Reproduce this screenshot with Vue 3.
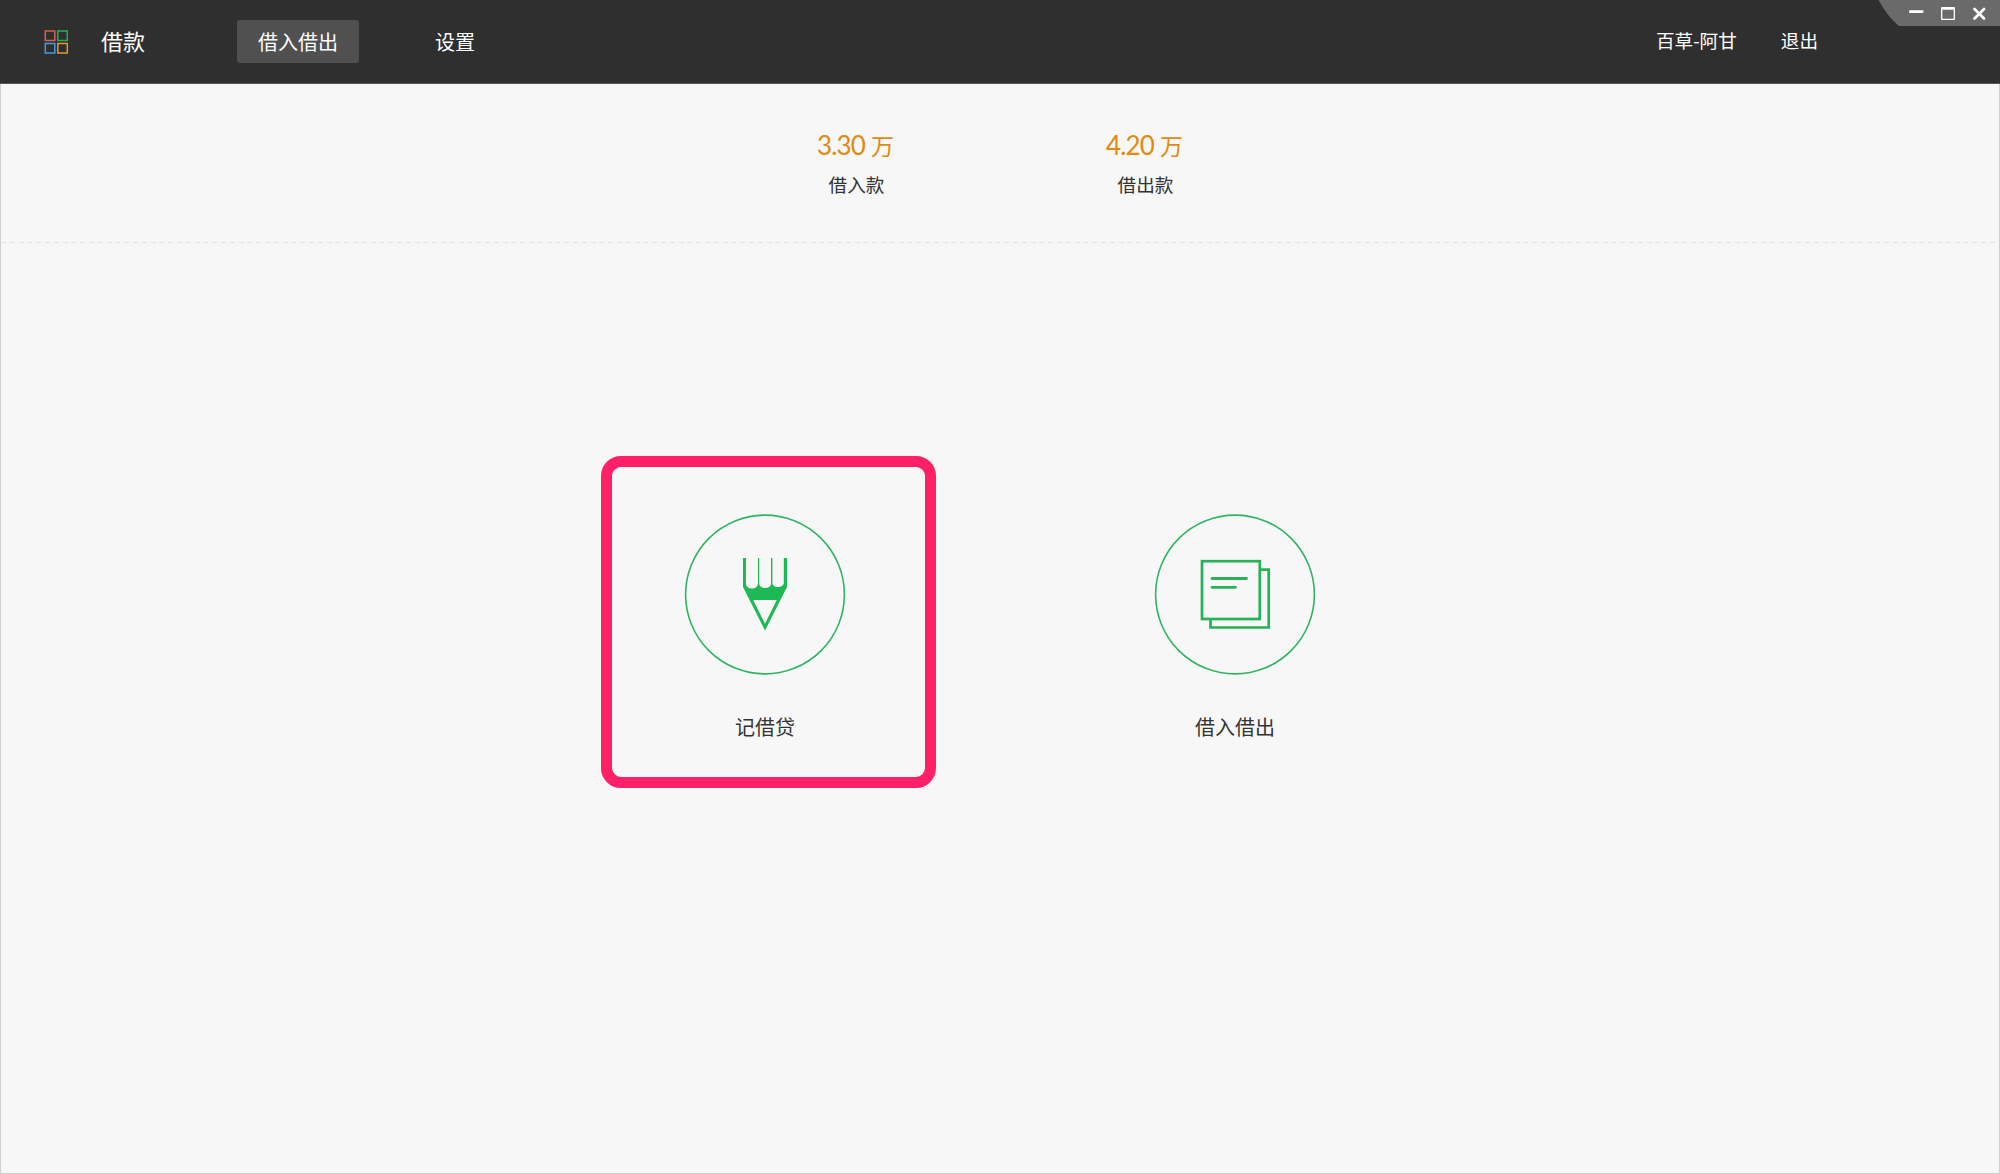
<script setup>
const totals = [
  { amount: '3.30', label: '借入款' },
  { amount: '4.20', label: '借出款' },
]
</script>

<template>
  <div class="app">
    <header class="bar">
      <svg class="logo" width="24" height="24" viewBox="0 0 24 24" fill="none" stroke-width="1.5">
        <rect x="1.3" y="1" width="9.5" height="9.5" stroke="#d8614f" />
        <rect x="13.8" y="1" width="9.5" height="9.5" stroke="#27ae55" />
        <rect x="1.3" y="13.5" width="9.5" height="9.5" stroke="#469ae6" />
        <rect x="13.8" y="13.5" width="9.5" height="9.5" stroke="#e29a2a" />
      </svg>
      <h1 class="title">借款</h1>
      <nav class="nav">
        <a class="tab active">借入借出</a>
        <a class="tab">设置</a>
      </nav>
      <div class="user">
        <span>百草-阿甘</span>
        <a>退出</a>
      </div>
      <svg class="window-controls" width="122" height="26" viewBox="0 0 122 26">
        <path d="M0.5 0H122V26H21Q9 16 0.5 0Z" fill="#6a6a6a" />
        <rect x="31" y="10.2" width="14.5" height="2.7" rx="1" fill="#fff" />
        <path d="M64 7H76Q77 7 77 8V19Q77 20 76 20H64Q63 20 63 19V8Q63 7 64 7ZM64.3 9.7V18.8H75.7V9.7Z" fill="#fff" fill-rule="evenodd" />
        <path d="M96.5 9L106 18.5M106 9L96.5 18.5" stroke="#fff" stroke-width="2.7" stroke-linecap="round" />
      </svg>
    </header>

    <div class="body">
      <section class="summary">
        <div v-for="t in totals" :key="t.label" class="total">
          <div class="amount"><span class="number">{{ t.amount }}</span><span class="unit">万</span></div>
          <div class="label">{{ t.label }}</div>
        </div>
      </section>
      <div class="divider"></div>
      <main class="actions">
        <div class="action">
          <svg class="icon" width="162" height="162" viewBox="0 0 162 162">
            <circle cx="81" cy="81.5" r="79.4" fill="none" stroke="#2fb562" stroke-width="1.6" />
            <path d="M59 45H62V70.5A6 4.8 0 0 0 74 71V45H75.2V71A6 4.8 0 0 0 87 71V45H88.4V71A6 4.8 0 0 0 99.8 70.5V45H103V74L81 117.5L59 74ZM69.2 87L81 110.8L92.8 87Z" fill="#1db954" fill-rule="evenodd" />
          </svg>
          <span>记借贷</span>
          <div class="highlight"></div>
        </div>
        <div class="action">
          <svg class="icon" width="162" height="162" viewBox="0 0 162 162" fill="none" stroke="#27b257">
            <circle cx="81" cy="81.5" r="79.4" stroke="#2fb562" stroke-width="1.6" />
            <rect x="48" y="48.2" width="57.8" height="57.8" stroke-width="2.7" />
            <path d="M106 56.7H114.7V114.5H56.5V106" stroke-width="2.7" />
            <path d="M58 65.5H92.5M58 74.3H81.5" stroke-width="2.8" stroke-linecap="round" />
          </svg>
          <span>借入借出</span>
        </div>
      </main>
    </div>
  </div>
</template>

<style>
body {
  background: #f7f7f7;
}
</style>

<style scoped>
.app {
  display: flex;
  flex-direction: column;
  height: 1174px;
  font-family: "Noto Sans CJK SC", sans-serif;
  color: #333;
}
.bar {
  position: relative;
  box-sizing: border-box;
  display: flex;
  align-items: center;
  height: 84px;
  padding: 0 182px 0 44px;
  background: #2f2f2f;
  border-bottom: 1px solid #555;
  color: #fff;
}
.title {
  margin: 0 0 3px 33px;
  font-size: 22px;
  line-height: 32px;
  font-weight: 400;
}
.nav {
  display: flex;
  gap: 55px;
  margin-left: 92px;
}
.tab {
  padding: 0 21px;
  font-size: 20px;
  line-height: 43px;
  border-radius: 3px;
}
.active {
  background: #505050;
}
.user {
  display: flex;
  gap: 44px;
  margin: 0 0 3px auto;
  font-size: 18.6px;
  line-height: 28px;
}
.window-controls {
  position: absolute;
  top: 0;
  right: 0;
}
.body {
  box-sizing: border-box;
  flex: 1;
  display: flex;
  flex-direction: column;
  border: 1px solid #d0d0d0;
  border-top: 0;
  background: #f7f7f7;
}
.summary {
  display: flex;
  justify-content: center;
  gap: 209px;
  height: 158px;
  box-sizing: border-box;
  padding-top: 43px;
}
.total {
  width: 80px;
  text-align: center;
}
.amount {
  display: flex;
  align-items: baseline;
  justify-content: center;
  gap: 6px;
  line-height: 36px;
  color: #e08a10;
}
.number {
  font-family: Lato, sans-serif;
  font-size: 26px;
  letter-spacing: -0.8px;
}
.unit {
  font-size: 23px;
}
.label {
  margin-top: 7px;
  padding-left: 2px;
  font-size: 18.6px;
  line-height: 28px;
}
.divider {
  height: 1px;
  background: repeating-linear-gradient(90deg, #e3e3e3 0 5px, transparent 5px 8.8px);
}
.actions {
  display: flex;
  justify-content: center;
  gap: 308px;
  padding-top: 270px;
}
.action {
  position: relative;
  display: flex;
  flex-direction: column;
  align-items: center;
  width: 162px;
  font-size: 20px;
  line-height: 30px;
}
.icon {
  margin-bottom: 37px;
}
.highlight {
  position: absolute;
  left: -83px;
  top: -57px;
  box-sizing: border-box;
  width: 335px;
  height: 332px;
  border: 11px solid #ff2067;
  border-radius: 20px;
}
</style>
